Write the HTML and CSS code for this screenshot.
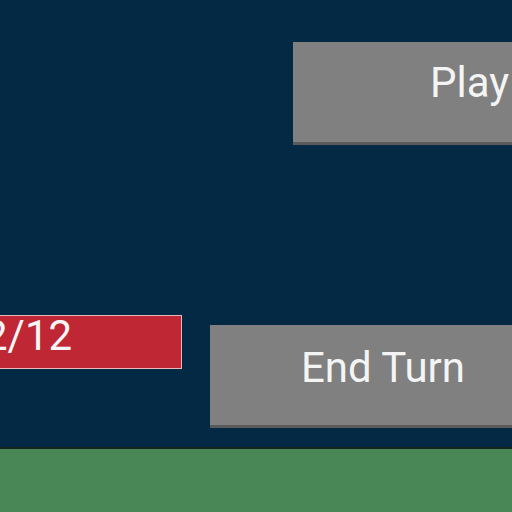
FILE: index.html
```html
<!DOCTYPE html>
<html>
<head>
<meta charset="utf-8">
<link rel="stylesheet" href="styles.css">
</head>
<body>
<div class="screen">
  <main class="board">
    <div class="top-row">
      <div class="btn btn-play">Play</div>
    </div>
    <div class="bottom-row">
      <div class="counter">2/12</div>
      <div class="btn btn-end">End Turn</div>
    </div>
  </main>
  <footer class="ground"></footer>
</div>
</body>
</html>
```
FILE: styles.css
```css
html, body {
  margin: 0;
  padding: 0;
}
body {
  width: 512px;
  height: 512px;
  overflow: hidden;
  background: #032944;
  font-family: Roboto, "Liberation Sans", sans-serif;
}
.screen {
  width: 512px;
  height: 512px;
  display: flex;
  flex-direction: column;
  overflow: hidden;
}
.board {
  height: 447px;
  flex: none;
  display: flex;
  flex-direction: column;
  padding-top: 42px;
  box-sizing: border-box;
}
.top-row {
  display: flex;
  padding-left: 293px;
  height: 103px;
}
.bottom-row {
  display: flex;
  align-items: flex-start;
  margin-top: 170px;
  margin-left: -60px;
}
.btn {
  flex: none;
  background: #808080;
  color: #f4f4f4;
  border-bottom: 3px solid #5a5a5a;
  font-size: 42px;
  font-weight: 400;
  line-height: 1;
  white-space: nowrap;
  box-sizing: border-box;
  height: 103px;
  padding-top: 21px;
  cursor: default;
}
.btn-play {
  width: 360px;
  padding-left: 137px;
  padding-top: 20px;
}
.btn-end {
  width: 360px;
  margin-left: 28px;
  margin-top: 10px;
  padding-left: 91px;
  padding-top: 22px;
}
.counter {
  flex: none;
  width: 242px;
  height: 54px;
  box-sizing: border-box;
  background: #c02734;
  border: 1px solid #e7b7bb;
  color: #f6f6f6;
  font-size: 42px;
  line-height: 40px;
  padding-left: 43px;
  white-space: nowrap;
}
.ground {
  flex: 1;
  background: #4a8757;
  border-top: 2px solid #12261b;
}
```
